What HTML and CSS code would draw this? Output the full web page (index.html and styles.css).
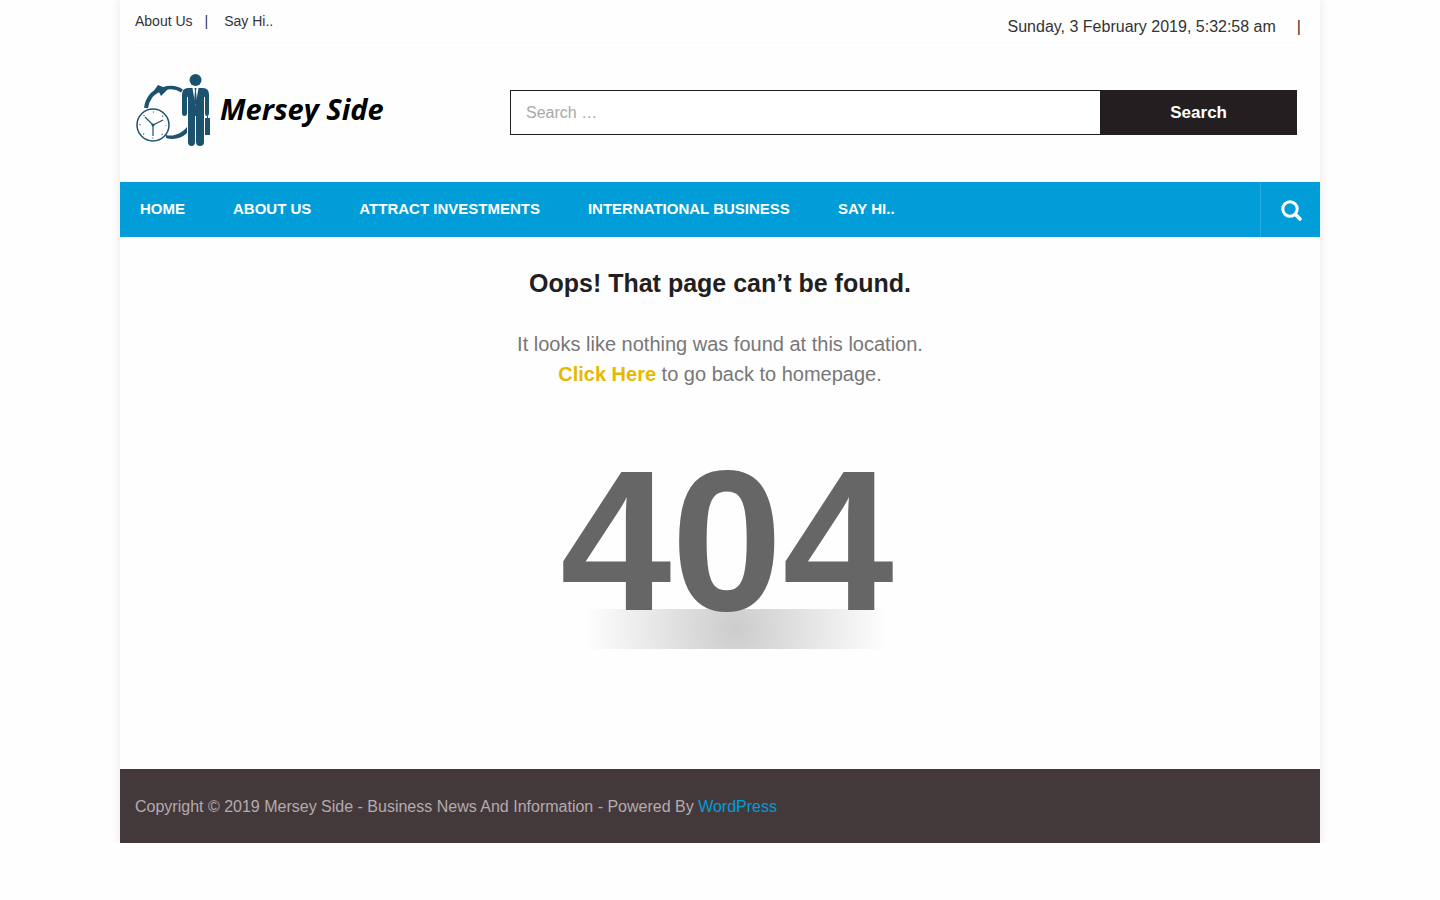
FILE: index.html
```
<!DOCTYPE html>
<html lang="en">
<head>
    <meta charset="UTF-8">
    <meta name="viewport" content="width=device-width, initial-scale=1.0">
    <title>Page not found - Mersey Side</title>
    <link rel="stylesheet" href="styles.css">
</head>
<body>
    <div class="page">
        <header>
            <div class="top-bar">
                <nav class="top-links">
                    <a href="#">About Us</a>
                    <span>|</span>
                    <a href="#">Say Hi..</a>
                </nav>
                <div class="date">
                    <span>Sunday, 3 February 2019, 5:32:58 am</span>
                    <span>|</span>
                </div>
            </div>

            <div class="branding">
                <a href="#" class="logo">
                    <svg width="76" height="76" viewBox="0 0 76 76" aria-hidden="true">
                        <!-- arrows -->
                        <path d="M11 36 C12 28 17 20 25 18" fill="none" stroke="#1d526e" stroke-width="4"/>
                        <path d="M28 17 C34 15 41 15 47 19" fill="none" stroke="#1d526e" stroke-width="3.5"/>
                        <path d="M23 13 L33 17 L26 24 L24 20 L18 20 Z" fill="#1d526e"/>
                        <path d="M31 63 C38 65 46 62 52 55 V61 C46 67 38 68 31 66 Z" fill="#1d526e"/>
                        <!-- clock -->
                        <circle cx="18" cy="53" r="16" fill="#fff" stroke="#1d526e" stroke-width="1.5"/>
                        <circle cx="18" cy="53" r="13" fill="none" stroke="#1d526e" stroke-width="1.2" stroke-dasharray="1 9.21" stroke-dashoffset="0.5"/>
                        <path d="M10 45 L18 53 L28 48 M18 53 V64" fill="none" stroke="#1d526e" stroke-width="1.2"/>
                        <circle cx="18" cy="53" r="1.5" fill="#1d526e"/>
                        <!-- man -->
                        <circle cx="60.5" cy="8" r="6" fill="#1d526e"/>
                        <path d="M53 16 H68 Q74 16 74 23 V41 Q74 44 72 44 Q70 44 70 41 V25 H69 V70 Q69 74 65 74 Q61 74 61 70 V44 H60 V70 Q60 74 56.5 74 Q53 74 53 70 V25 H52 V41 Q52 44 49.5 44 Q47 44 47 41 V23 Q47 16 53 16 Z" fill="#1d526e"/>
                        <path d="M57.5 16 L60.5 34 L63.500 16 Z" fill="#fff"/>
                        <path d="M59.5 16 H61.5 L61 19 L62 30 L60.5 33 L59 30 L60 19 Z" fill="#1d526e"/>
                        <!-- briefcase -->
                        <path d="M70 46 H72 V44 H73 V46 H75 V63 H70 Z" fill="#1d526e"/>
                    </svg>
                    <span class="site-name">Mersey Side</span>
                </a>
                <form class="search-form">
                    <input type="search" placeholder="Search …" aria-label="Search for">
                    <button type="submit">Search</button>
                </form>
            </div>
        </header>

        <nav class="main-nav">
            <ul>
                <li><a href="#">Home</a></li>
                <li><a href="#">About Us</a></li>
                <li><a href="#">Attract Investments</a></li>
                <li><a href="#">International Business</a></li>
                <li><a href="#">Say Hi..</a></li>
            </ul>
            <button class="search-toggle" type="button" aria-label="Open search">
                <svg width="22" height="22" viewBox="0 0 22 22">
                    <circle cx="9" cy="9" r="7.2" fill="none" stroke="#fff" stroke-width="3"/>
                    <path d="M14.5 14.5 L19 19" stroke="#fff" stroke-width="3.6" stroke-linecap="round"/>
                </svg>
            </button>
        </nav>

        <main>
            <h1>Oops! That page can’t be found.</h1>
            <p>It looks like nothing was found at this location.<br>
            <a href="#">Click Here</a> to go back to homepage.</p>
            <div class="error-code">
                <div class="number">404</div>
                <div class="shadow"></div>
            </div>
        </main>

        <footer>
            Copyright © 2019 Mersey Side - Business News And Information - Powered By <a href="#">WordPress</a>
        </footer>
    </div>
</body>
</html>
```
FILE: styles.css
```
* {
    box-sizing: border-box;
}
body {
    margin: 0;
    background: #fefefe;
    color: #333;
    font-family: Arial, "Liberation Sans", sans-serif;
    font-size: 16px;
}
a {
    color: inherit;
    text-decoration: none;
}
.page {
    max-width: 1200px;
    margin: 0 auto;
    background: #fefefe;
    box-shadow: 0 0 10px #e8e8e8;
}
header {
    padding: 0 15px 34px;
}
.top-bar {
    display: flex;
    justify-content: space-between;
    height: 43px;
    margin-right: 4px;
    border-bottom: 1px solid #fafafa;
}
.top-links {
    display: flex;
    gap: 12px;
    padding-top: 12px;
    font-size: 14px;
    line-height: 18px;
}
.top-links a:last-child {
    margin-left: 4px;
}
.date {
    display: flex;
    gap: 21px;
    padding-top: 18px;
    line-height: 18px;
}
.branding {
    display: flex;
    justify-content: space-between;
    align-items: center;
    margin-top: 29px;
    padding-right: 8px;
}
.logo {
    display: flex;
    align-items: center;
    gap: 9px;
    color: #000;
    font: italic bold 29px "Open Sans", sans-serif;
}
.site-name {
    padding-bottom: 4px;
}
.search-form {
    display: flex;
    width: 787px;
    height: 45px;
    margin-top: 4px;
}
.search-form input {
    flex: 1;
    min-width: 0;
    padding: 2px 15px 0;
    background: #fff;
    border: 1px solid #231f20;
    border-right: 0;
    border-radius: 0;
    font: inherit;
}
.search-form input::placeholder {
    color: #a9a9a9;
}
.search-form button {
    width: 25%;
    padding-top: 3px;
    background: #231f20;
    color: #fff;
    border: 0;
    font: bold 17px Arial, "Liberation Sans", sans-serif;
    cursor: pointer;
}
.main-nav {
    display: flex;
    justify-content: space-between;
    height: 55px;
    background: #009dd8;
    color: #fff;
}
.main-nav ul {
    display: flex;
    gap: 48px;
    margin: 0;
    padding: 0 20px;
    list-style: none;
    font-size: 15px;
    font-weight: bold;
    line-height: 54px;
    text-transform: uppercase;
}
.search-toggle {
    display: flex;
    align-items: center;
    justify-content: center;
    width: 60px;
    padding: 3px 0 0 3px;
    background: none;
    border: 0;
    border-left: 1px solid #28abe0;
    cursor: pointer;
}
main {
    padding: 30px 15px 120px;
    text-align: center;
}
h1 {
    margin: 0 0 30px;
    color: #231f20;
    font-size: 25px;
    line-height: 32px;
}
main p {
    margin: 0;
    color: #777;
    font-size: 20px;
    line-height: 30px;
}
main p a {
    color: #e6b800;
    font-weight: bold;
}
.error-code {
    margin-top: 52px;
    padding-left: 14px;
}
.number {
    color: #666;
    font-size: 200px;
    font-weight: bold;
    line-height: 200px;
}
.shadow {
    width: 318px;
    height: 40px;
    margin: -32px auto 0;
    padding-left: 18px;
    background: radial-gradient(circle closest-corner, #ccc, transparent) content-box;
}
footer {
    padding: 29px 15px 27px;
    background: #43393b;
    color: #b5abad;
    line-height: 18px;
}
footer a {
    color: #009dd8;
}
```
